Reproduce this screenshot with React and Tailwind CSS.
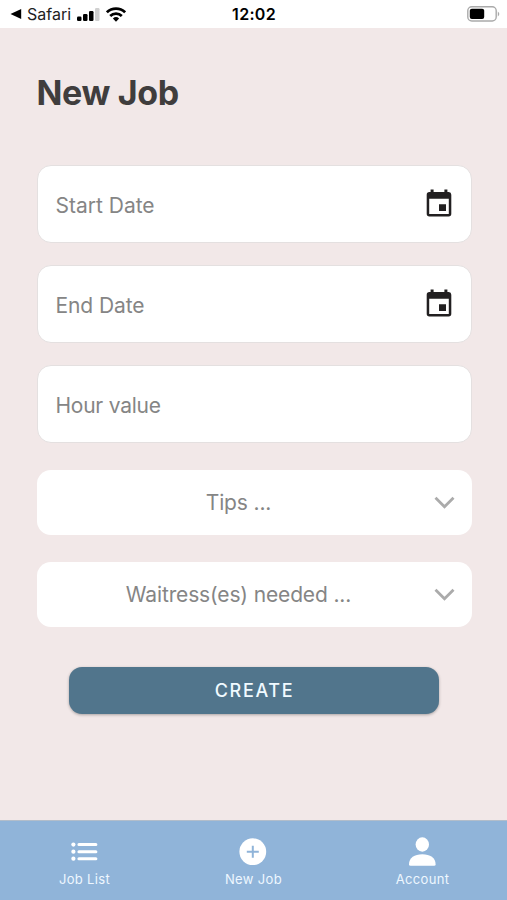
function CalendarIcon() {
  return (
    <svg viewBox="0 0 26 28" className="h-7 w-[26px]" fill="#222021">
      <path
        fillRule="evenodd"
        d="M4.6 0.5h3V3h10.8V0.5h3V3h1.4A2.7 2.7 0 0 1 25.300 5.700V24.800A2.700 2.700 0 0 1 22.600 27.500H3.400A2.700 2.700 0 0 1 0.700 24.800V5.700A2.700 2.700 0 0 1 3.400 3h1.200zM3.200 9.700V25H22.800V9.700zM13 15.300h7V22h-7z"
      />
    </svg>
  );
}

function DateField({ label, icon, tracking }) {
  return (
    <div className="flex h-[78px] items-center justify-between rounded-[14px] border border-[#e4e0e0] bg-white pr-[18.500px] pl-[18px] text-[21px] text-[#858585]">
      <span className={`pt-[3px] ${tracking}`}>{label}</span>
      {icon && <div className="-mt-0.5"><CalendarIcon /></div>}
    </div>
  );
}

function SelectField({ label }) {
  return (
    <div className="flex h-[65px] items-center rounded-[14px] bg-white pr-[17px] pl-[7px] text-[21px] text-[#858585]">
      <span className="flex-1 text-center tracking-[-0.14px]">{label}</span>
      <svg viewBox="0 0 21 14" className="h-3.5 w-[21px]" fill="none" stroke="#ababab" strokeWidth="2.8">
        <path d="M1.500 1.800l9 9 9-9" />
      </svg>
    </div>
  );
}

function Tab({ label, children }) {
  return (
    <div className="flex w-[169px] flex-col items-center pt-[15px]">
      <svg viewBox="0 0 32 32" className="h-8 w-8" fill="white">{children}</svg>
      <span className="mt-0.5 text-[13px] leading-[18px] tracking-[0.35px] text-[#eef7ff]">{label}</span>
    </div>
  );
}

export default function App() {
  return (
    <div className="flex h-[900px] w-[507px] flex-col overflow-hidden bg-[#f2e8e8] font-['Inter',sans-serif]">
      <header className="grid h-7 grid-cols-3 items-center bg-white pr-[7px] pl-[10px]">
        <div className="flex items-center text-[#222]">
          <svg viewBox="0 0 12 10" className="h-2.5 w-3" fill="black"><path d="M0.500 5L11.200 0v10z" /></svg>
          <span className="ml-[5px] text-[16px] leading-5">Safari</span>
          <svg viewBox="0 0 23 13" className="ml-[6px] h-[13px] w-[23px]" fill="black">
            <rect x="0" y="8.500" width="4.500" height="4.500" rx="1.200" />
            <rect x="6" y="6" width="4.500" height="7" rx="1.200" />
            <rect x="12" y="3" width="4.500" height="10" rx="1.200" />
            <rect x="18" y="0" width="4.500" height="13" rx="1.200" fill="#d0d0d0" />
          </svg>
          <svg viewBox="0 0 20 15" className="ml-[5.500px] h-[15px] w-5" fill="none" stroke="black" strokeWidth="2.700">
            <path d="M0.900 5.300a13 13 0 0 1 18.200 0M4.200 9a8.300 8.300 0 0 1 11.600 0" />
            <path d="M6.900 11.500a4.500 4.500 0 0 1 6.200 0L10 14.700z" fill="black" stroke="none" />
          </svg>
        </div>
        <span className="pr-[2px] text-center text-[16px] leading-5 font-semibold tracking-[0.3px] text-black">12:02</span>
        <svg viewBox="0 0 33 16" className="h-4 w-[33px] justify-self-end">
          <rect x="0.800" y="0.800" width="28.400" height="14.200" rx="4" fill="white" stroke="#aaa" strokeWidth="1.400" />
          <rect x="2.800" y="2.800" width="14.400" height="10.200" rx="2" fill="black" />
          <path d="M30.800 5.500q3 2.500 0 5z" fill="#aaa" />
        </svg>
      </header>
      <main className="flex-1 pr-[35.5px] pl-[36.5px]">
        <h1 className="mt-[43px] text-[34px] leading-[44px] font-bold tracking-[-0.35px] text-[#403d3d]">New Job</h1>
        <div className="mt-[50px] flex flex-col gap-[22px]">
          <DateField label="Start Date" tracking="tracking-normal" icon />
          <DateField label="End Date" tracking="tracking-[-0.1px]" icon />
          <DateField label="Hour value" tracking="tracking-[-0.25px]" />
        </div>
        <div className="mt-[27px] flex flex-col gap-[27px]">
          <SelectField label="Tips ..." />
          <SelectField label="Waitress(es) needed ..." />
        </div>
        <button className="mt-10 ml-[32.500px] block h-[47px] w-[370px] rounded-[13px] bg-[#51758c] pl-px text-[18px] font-medium tracking-[1.7px] text-[#f0faff] shadow-[0_1px_3px_rgba(0,0,0,0.3)]">
          CREATE
        </button>
      </main>
      <nav className="flex h-20 border-t border-[#b2bdca] bg-[#90b4d9]">
        <Tab label="Job List">
          <circle cx="4.400" cy="8.600" r="2.100" />
          <circle cx="4.400" cy="15.700" r="2.100" />
          <circle cx="4.400" cy="22.700" r="2.100" />
          <path d="M9.900 7.100h17a1.500 1.500 0 0 1 0 3H9.900a1.500 1.500 0 0 1 0-3zM9.900 14.200h17a1.500 1.500 0 0 1 0 3H9.900a1.500 1.500 0 0 1 0-3zM9.900 21.200h17a1.500 1.500 0 0 1 0 3H9.900a1.500 1.500 0 0 1 0-3z" />
        </Tab>
        <Tab label="New Job">
          <circle cx="14.800" cy="15.700" r="13.400" />
          <path d="M14.800 9.700v12M8.800 15.700h12" stroke="#90b4d9" strokeWidth="2" />
        </Tab>
        <Tab label="Account">
          <ellipse cx="15.300" cy="8.500" rx="6.700" ry="7.200" />
          <path d="M2 28.500C2 21.500 7.500 18.200 15.300 18.200S28.600 21.500 28.600 28.500Q28.600 29.700 27.100 29.700H3.500Q2 29.700 2 28.500z" />
        </Tab>
      </nav>
    </div>
  );
}
